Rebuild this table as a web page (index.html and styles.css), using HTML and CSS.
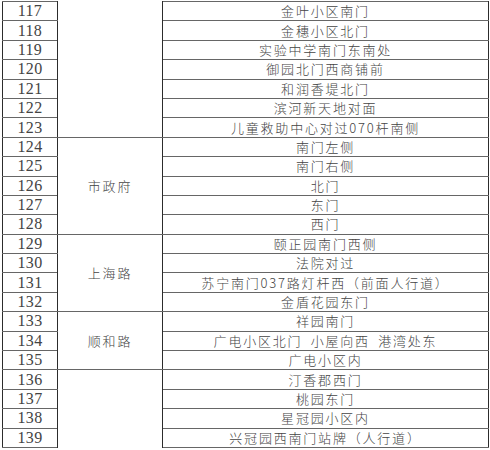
FILE: index.html
```html
<!DOCTYPE html>
<html lang="zh-CN">
<head>
<meta charset="utf-8">
<title>站点表</title>
<link rel="stylesheet" href="styles.css">
</head>
<body>
<table class="sheet">
  <colgroup>
    <col class="c-num"><col class="c-area"><col class="c-loc">
  </colgroup>
  <tbody>
    <tr><td class="num">117</td><td class="area open-top" rowspan="7"></td><td class="loc">金叶小区南门</td></tr>
    <tr><td class="num">118</td><td class="loc">金穗小区北门</td></tr>
    <tr><td class="num">119</td><td class="loc">实验中学南门东南处</td></tr>
    <tr><td class="num">120</td><td class="loc">御园北门西商铺前</td></tr>
    <tr><td class="num">121</td><td class="loc">和润香堤北门</td></tr>
    <tr><td class="num">122</td><td class="loc">滨河新天地对面</td></tr>
    <tr><td class="num">123</td><td class="loc">儿童救助中心对过070杆南侧</td></tr>
    <tr><td class="num">124</td><td class="area" rowspan="5">市政府</td><td class="loc">南门左侧</td></tr>
    <tr><td class="num">125</td><td class="loc">南门右侧</td></tr>
    <tr><td class="num">126</td><td class="loc">北门</td></tr>
    <tr><td class="num">127</td><td class="loc">东门</td></tr>
    <tr><td class="num">128</td><td class="loc">西门</td></tr>
    <tr><td class="num">129</td><td class="area" rowspan="4">上海路</td><td class="loc">颐正园南门西侧</td></tr>
    <tr><td class="num">130</td><td class="loc">法院对过</td></tr>
    <tr><td class="num">131</td><td class="loc">苏宁南门037路灯杆西（前面人行道）</td></tr>
    <tr><td class="num">132</td><td class="loc">金盾花园东门</td></tr>
    <tr><td class="num">133</td><td class="area" rowspan="3">顺和路</td><td class="loc">祥园南门</td></tr>
    <tr><td class="num">134</td><td class="loc">广电小区北门&#8194;小屋向西&#8194;港湾处东</td></tr>
    <tr><td class="num">135</td><td class="loc">广电小区内</td></tr>
    <tr><td class="num">136</td><td class="area open-bottom" rowspan="4"></td><td class="loc">汀香郡西门</td></tr>
    <tr><td class="num">137</td><td class="loc">桃园东门</td></tr>
    <tr><td class="num">138</td><td class="loc">星冠园小区内</td></tr>
    <tr><td class="num">139</td><td class="loc">兴冠园西南门站牌（人行道）</td></tr>
  </tbody>
</table>
</body>
</html>
```

FILE: styles.css
```css
html, body {
  margin: 0;
  padding: 0;
  background: #ffffff;
}

.sheet {
  margin: 1px 0 0 2px;
  border-collapse: collapse;
  table-layout: fixed;
  width: 486px;
}

.c-num { width: 55px; }
.c-area { width: 105px; }
.c-loc { width: 326px; }

.sheet tr {
  height: 19.4px;
}

.sheet td {
  padding: 0;
  text-align: center;
  vertical-align: middle;
  border-left: 1px solid #2c2c2c;
  border-right: 1px solid #2c2c2c;
  border-top: 1px solid #666666;
  border-bottom: 1px solid #666666;
  color: #444444;
  line-height: 18px;
  white-space: nowrap;
  overflow: hidden;
}

.num {
  font-family: "Liberation Serif", "Noto Sans CJK SC", serif;
  font-size: 16px;
  letter-spacing: 0.3px;
  color: #3a3a3a;
}

.area,
.loc {
  font-family: "Noto Sans CJK SC", "Liberation Sans", sans-serif;
  font-size: 13px;
  font-weight: 300;
  letter-spacing: 1.8px;
  padding-left: 1.8px;
  color: #5a5a5a;
}

.area.open-top {
  border-top: 0;
}

.area.open-bottom {
  border-bottom: 0;
}
```
